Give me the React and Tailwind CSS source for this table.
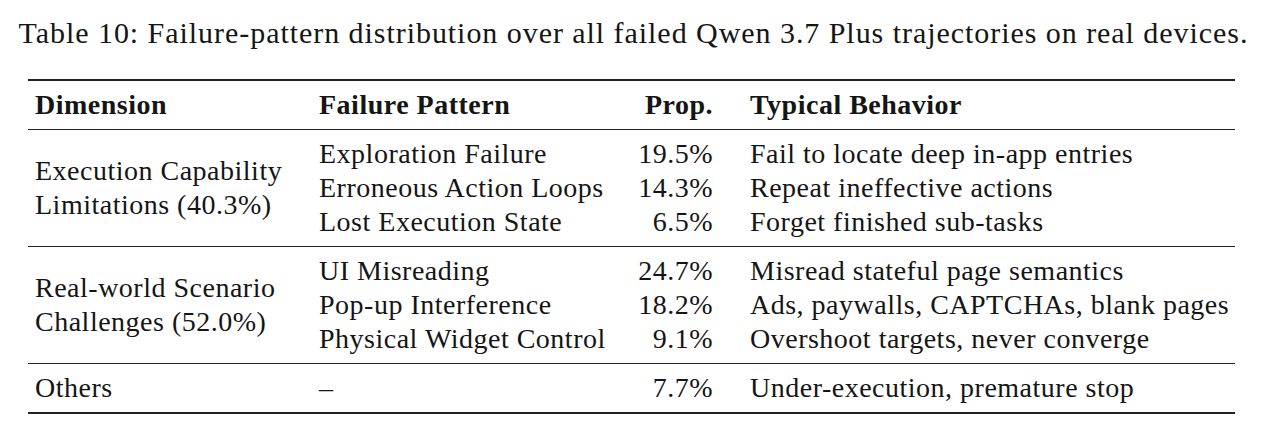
const groups = [
  {
    dim: ['Execution Capability', 'Limitations (40.3%)'],
    rows: [
      ['Exploration Failure', '19.5%', 'Fail to locate deep in-app entries'],
      ['Erroneous Action Loops', '14.3%', 'Repeat ineffective actions'],
      ['Lost Execution State', '6.5%', 'Forget finished sub-tasks'],
    ],
  },
  {
    dim: ['Real-world Scenario', 'Challenges (52.0%)'],
    rows: [
      ['UI Misreading', '24.7%', 'Misread stateful page semantics'],
      ['Pop-up Interference', '18.2%', 'Ads, paywalls, CAPTCHAs, blank pages'],
      ['Physical Widget Control', '9.1%', 'Overshoot targets, never converge'],
    ],
  },
  {
    dim: ['Others'],
    rows: [['–', '7.7%', 'Under-execution, premature stop']],
  },
];

function Row({ cells, bold }) {
  return (
    <div className={`flex h-[34px] items-center ${bold ? 'font-bold' : ''}`}>
      <div className="w-[300px]">{cells[0]}</div>
      <div className="w-[94px] text-right">{cells[1]}</div>
      <div className="pl-[37px] whitespace-nowrap">{cells[2]}</div>
    </div>
  );
}

export default function App() {
  return (
    <div className="w-[1267px] h-[437px] overflow-hidden bg-white text-[#151515] font-['Liberation_Serif',serif] text-[28px] leading-[34px] tracking-[0.5px]">
      <div className="h-[70px] pt-[16px] text-center text-[30px] tracking-[0.95px] whitespace-nowrap">
        Table 10: Failure-pattern distribution over all failed Qwen 3.7 Plus trajectories on real devices.
      </div>
      <div className="ml-[28px] mt-[9px] w-[1207px] border-y-2 border-[#222]">
        <div className="flex py-[7px] border-b border-[#222] font-bold">
          <div className="w-[291px] pl-[7px] h-[34px] flex items-center">Dimension</div>
          <Row cells={['Failure Pattern', 'Prop.', 'Typical Behavior']} />
        </div>
        {groups.map((g, i) => (
          <div
            key={i}
            className={`flex py-[7px] ${i < groups.length - 1 ? 'border-b border-[#222]' : ''}`}
          >
            <div className="w-[291px] pl-[7px] flex flex-col justify-center whitespace-nowrap">
              {g.dim.map((d) => (
                <div key={d}>{d}</div>
              ))}
            </div>
            <div className="flex flex-col">
              {g.rows.map((r) => (
                <Row key={r[0]} cells={r} />
              ))}
            </div>
          </div>
        ))}
      </div>
    </div>
  );
}
